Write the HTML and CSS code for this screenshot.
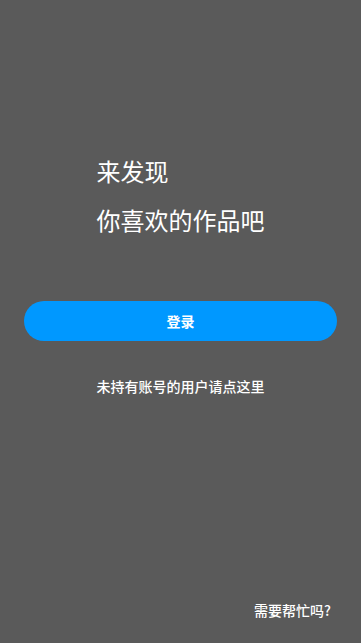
FILE: index.html
```html
<!DOCTYPE html>
<html lang="zh-CN">
<head>
<meta charset="utf-8">
<meta name="viewport" content="width=device-width, initial-scale=1">
<link rel="stylesheet" href="styles.css">
<title>登录</title>
</head>
<body>
<div class="page">
  <div class="hero">
    <div class="title">
      <div class="line">来发现</div>
      <div class="line">你喜欢的作品吧</div>
    </div>
  </div>
  <button class="login">登录</button>
  <div class="register">未持有账号的用户请点这里</div>
  <div class="spacer"></div>
  <div class="help">需要帮忙吗?</div>
</div>
</body>
</html>
```
FILE: styles.css
```css
html, body {
  margin: 0;
  padding: 0;
  background: #5a5a5a;
}
body {
  font-family: "Noto Sans CJK SC", "Noto Sans", sans-serif;
  color: #ffffff;
}
.page {
  height: 643px;
  display: flex;
  flex-direction: column;
  box-sizing: border-box;
  padding-top: 146px;
  padding-bottom: 23px;
}
.hero {
  display: flex;
  justify-content: center;
}
.title {
  font-size: 24px;
  line-height: 49px;
  text-align: left;
}
.login {
  margin: 57px 24px 0 24px;
  height: 40px;
  border: none;
  border-radius: 20px;
  background: #0098ff;
  color: #ffffff;
  font-family: inherit;
  font-size: 14px;
  font-weight: 700;
  padding: 0;
}
.register {
  margin-top: 35px;
  text-align: center;
  font-size: 14px;
  line-height: 20px;
  font-weight: 500;
}
.spacer {
  flex: 1;
}
.help {
  text-align: right;
  font-size: 14px;
  line-height: 20px;
  font-weight: 500;
  padding-right: 30px;
}
```
